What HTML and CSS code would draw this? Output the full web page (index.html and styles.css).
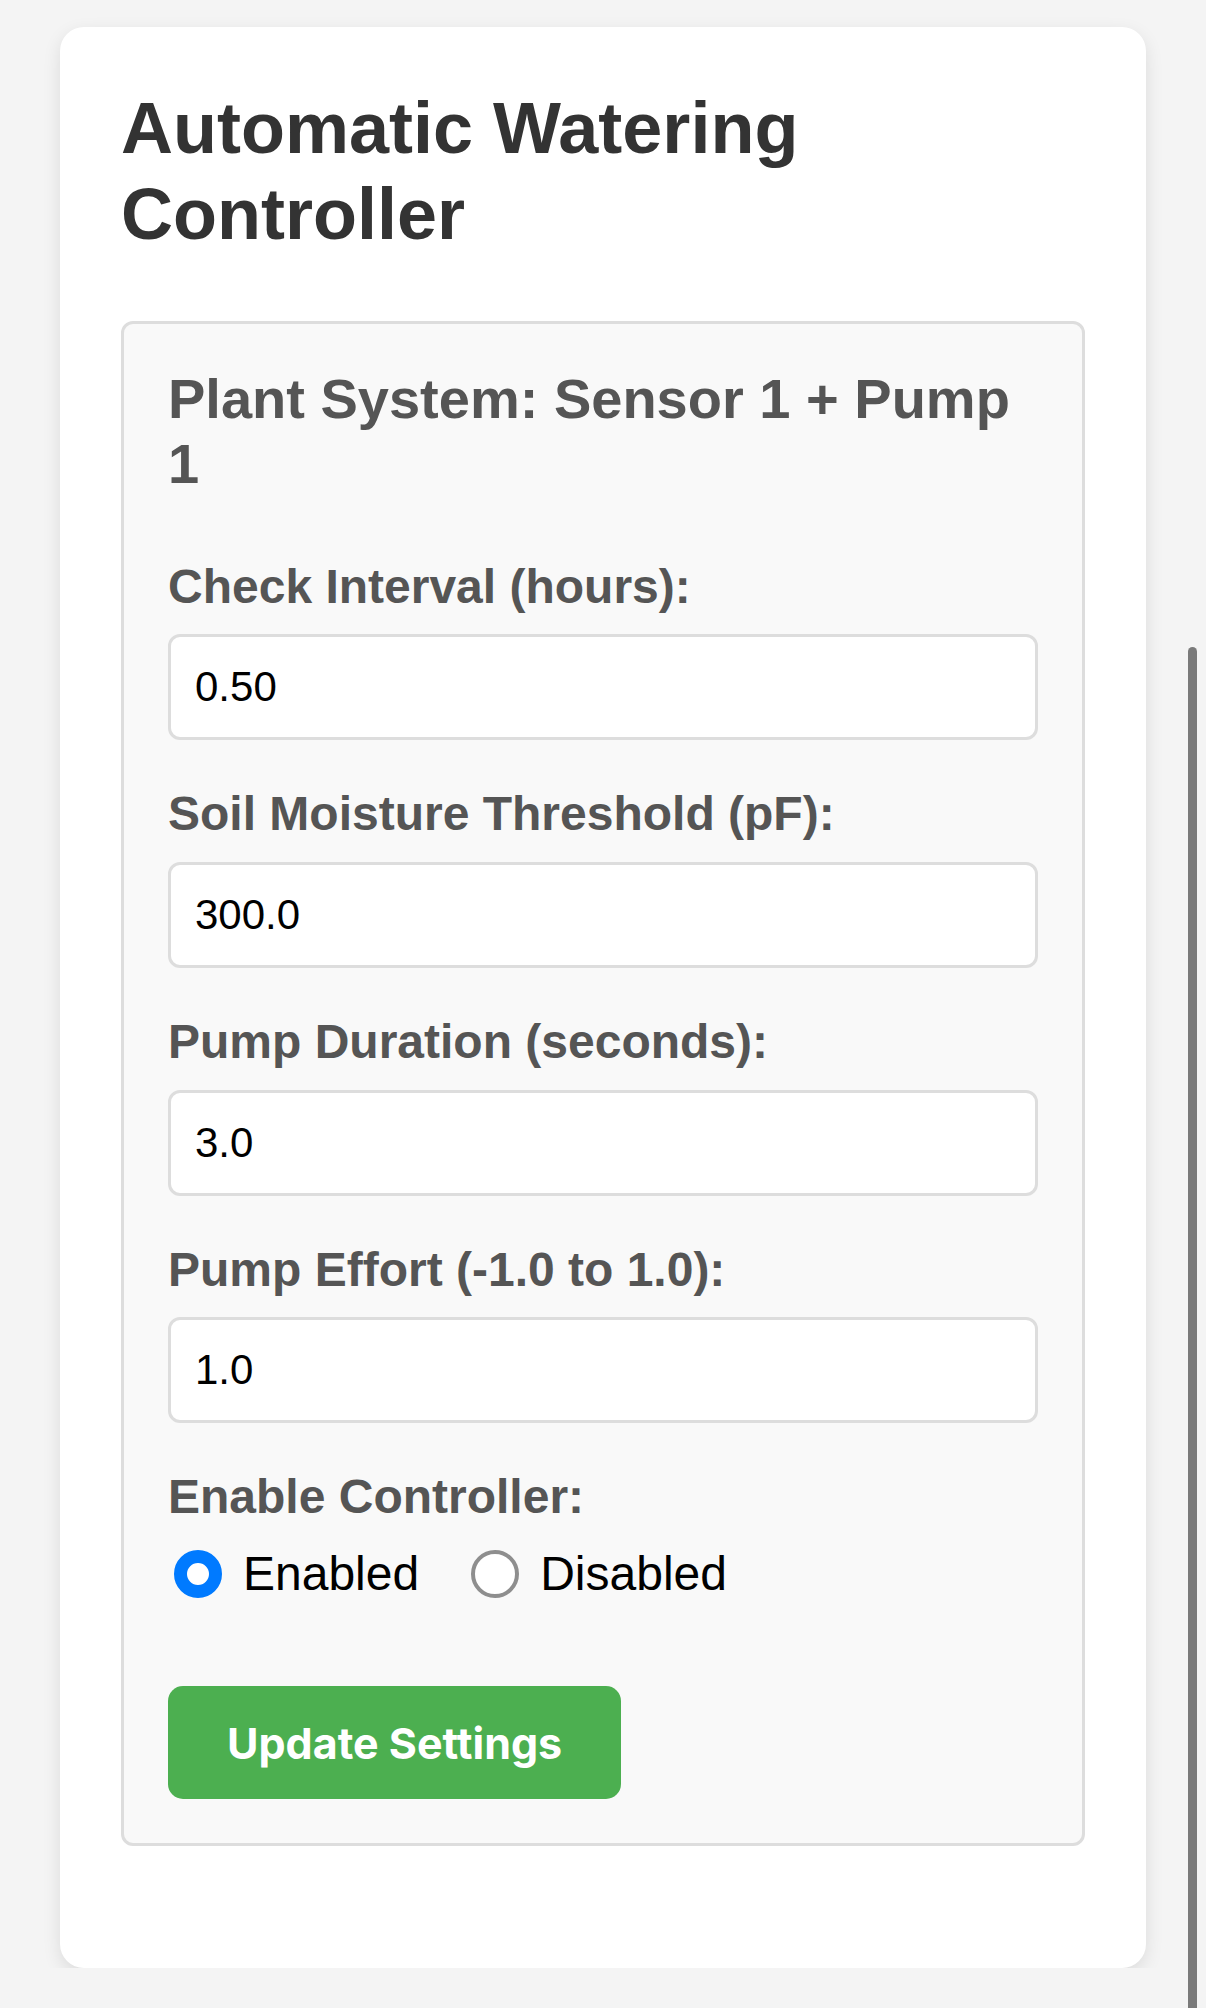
FILE: index.html
```
<!DOCTYPE html>
<html lang="en">
<head>
    <meta charset="UTF-8">
    <meta name="viewport" content="width=device-width, initial-scale=1">
    <title>Automatic Watering Controller</title>
    <link rel="stylesheet" href="styles.css">
</head>
<body>
    <div class="container">
        <h1>Automatic Watering Controller</h1>
        <form class="system" onsubmit="return false;">
            <h2>Plant System: Sensor 1 + Pump 1</h2>
            <div class="form-group">
                <label for="interval">Check Interval (hours):</label>
                <input class="Input" type="text" id="interval" value="0.50">
            </div>
            <div class="form-group">
                <label for="threshold">Soil Moisture Threshold (pF):</label>
                <input class="Input" type="text" id="threshold" value="300.0">
            </div>
            <div class="form-group">
                <label for="duration">Pump Duration (seconds):</label>
                <input class="Input" type="text" id="duration" value="3.0">
            </div>
            <div class="form-group">
                <label for="effort">Pump Effort (-1.0 to 1.0):</label>
                <input class="Input" type="text" id="effort" value="1.0">
            </div>
            <div class="form-group last">
                <label>Enable Controller:</label>
                <div class="radios">
                    <span class="option">
                        <input type="radio" name="enabled" id="on" value="1" checked>
                        <span>Enabled</span>
                    </span>
                    <span class="option">
                        <input type="radio" name="enabled" id="off" value="0">
                        <span>Disabled</span>
                    </span>
                </div>
            </div>
            <button type="submit">Update Settings</button>
        </form>
    </div>
    <div class="scroll-indicator"></div>
</body>
</html>
```

FILE: styles.css
```
*{
    box-sizing: border-box;
}
html {
    overflow: hidden;
}
body {
    margin: 0;
    padding: 27px 60px 0;
    background-color: #f4f4f4;
    font-family: "Liberation Sans", Arial, Helvetica, sans-serif;
}
.container {
    background-color: white;
    border-radius: 24px;
    padding: 58px 61px 122px;
    box-shadow: 0 6px 18px rgba(0, 0, 0, 0.1);
}
h1 {
    margin: 0 0 63px;
    font-size: 72px;
    line-height: 1.2;
    color: #333;
}
.system {
    margin: 0;
    background-color: #f9f9f9;
    border: 3px solid #ddd;
    border-radius: 12px;
    padding: 42px 44px 44px;
}
h2 {
    margin: 0 0 62px;
    font-size: 56px;
    line-height: 65px;
    color: #555;
}
.form-group {
    margin-bottom: 45px;
}
.form-group.last {
    margin-bottom: 84px;
}
label {
    display: block;
    margin-bottom: 19px;
    font-size: 48px;
    font-weight: bold;
    line-height: 1.2;
    color: #555;
}
.Input {
    display: block;
    width: 100%;
    height: 106px;
    padding: 0 24px;
    border: 3px solid #ddd;
    border-radius: 12px;
    background-color: white;
    font-family: "Liberation Sans", Arial, sans-serif;
    font-size: 42px;
    color: black;
}
.radios {
    display: flex;
    align-items: center;
    height: 57.6px;
    margin-top: 2px;
    font-size: 48px;
    color: black;
}
.option {
    display: flex;
    align-items: center;
    gap: 21px;
    margin-right: 52px;
}
.option:first-child {
    margin-left: 6px;
}
input[type="radio"] {
    appearance: none;
    -webkit-appearance: none;
    width: 48px;
    height: 48px;
    margin: 0;
    border: 4px solid #8e8e8e;
    border-radius: 50%;
    background-color: white;
}
input[type="radio"]:checked {
    border: 13px solid #007aff;
}
button {
    display: block;
    height: 113px;
    padding: 0 59px;
    background-color: #4caf50;
    color: white;
    border: none;
    border-radius: 15px;
    font-family: Inter, "Liberation Sans", sans-serif;
    font-size: 43px;
    font-weight: bold;
    cursor: pointer;
}
.scroll-indicator {
    position: fixed;
    top: 647px;
    right: 9px;
    width: 9px;
    height: 1400px;
    border-radius: 5px;
    background-color: #7a7a7a;
}
```
